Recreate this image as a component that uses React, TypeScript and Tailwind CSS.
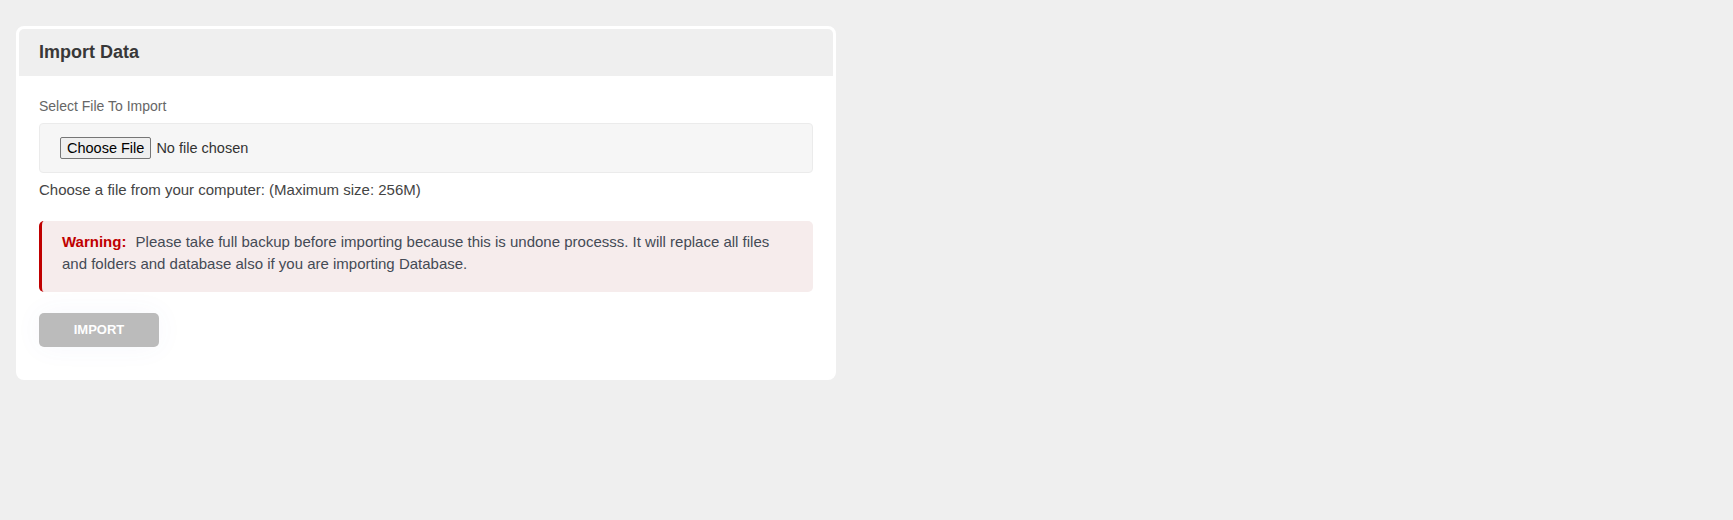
import React from 'react';

export default function App() {
  return (
    <div
      className="min-h-screen bg-[#efefef] pt-[26px] pl-4"
      style={{ fontFamily: '"Liberation Sans", Arial, sans-serif' }}
    >
      <div className="w-[820px] overflow-hidden rounded-lg border-[3px] border-white bg-white">
        <div className="flex h-[47px] items-center bg-[#efefef] px-5">
          <h2 className="text-[18px] font-bold text-[#383838]">Import Data</h2>
        </div>

        <div className="px-5 pt-5 pb-[30px]">
          <label className="mb-[7px] block text-[14px] leading-5 text-[#666]">Select File To Import</label>
          <div className="flex h-[50px] items-center rounded border border-[#ebebeb] bg-[#f6f6f6] pl-5">
            <input
              type="file"
              className="text-[14.5px] text-[#333] file:mr-[5px] file:h-[22px] file:rounded-[2px] file:border file:border-[#767676] file:bg-[#efefef] file:px-[6px] file:text-black"
            />
          </div>
          <p className="mt-[6px] text-[15px] leading-[21.4px] text-[#444]">
            Choose a file from your computer: (Maximum size: 256M)
          </p>

          <div className="mt-[21px] rounded-[5px] border-l-[3px] border-[#c00000] bg-[#f6ecec] pt-[10px] pr-5 pb-[17px] pl-5 text-[15px] leading-[21.6px] text-[#444a55]">
            <strong className="mr-[5px] text-[#c00000]">Warning:</strong> Please take full backup before importing
            because this is undone processs. It will replace all files and folders and database also if you are
            importing Database.
          </div>

          <button
            type="button"
            className="mt-[21px] h-[34px] w-[120px] rounded-[5px] bg-[#bbbbbb] text-[13px] font-bold text-white shadow-[0_0_28px_rgba(70,90,200,0.05)]"
          >
            IMPORT
          </button>
        </div>
      </div>
    </div>
  );
}
